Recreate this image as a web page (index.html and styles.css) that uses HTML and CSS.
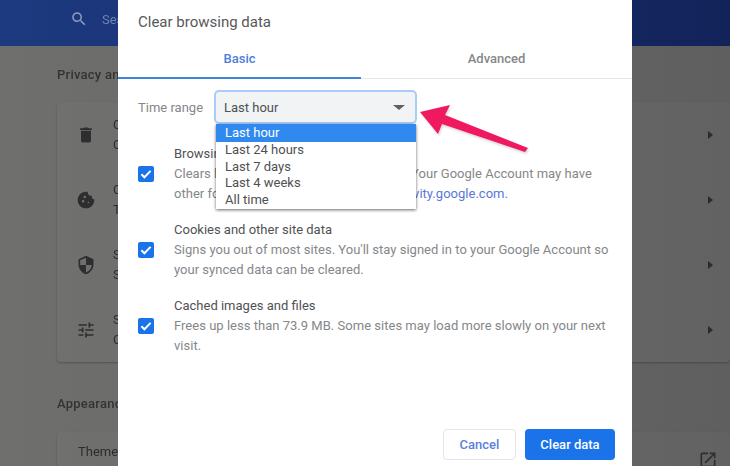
FILE: index.html
```html
<!DOCTYPE html>
<html lang="en">
<head>
  <meta charset="UTF-8">
  <title>Settings - Clear browsing data</title>
  <link rel="stylesheet" href="styles.css">
</head>
<body>

  <!-- Settings page, dimmed behind the dialog -->
  <header class="topo">
    <svg class="icone-busca" viewBox="0 0 24 24"><path d="M15.5 14h-.79l-.28-.27C15.41 12.59 16 11.11 16 9.5 16 5.91 13.09 3 9.5 3S3 5.91 3 9.5 5.91 16 9.5 16c1.61 0 3.09-.59 4.23-1.57l.27.28v.79l5 4.99L20.49 19l-4.99-5zm-6 0C7.01 14 5 11.99 5 9.5S7.01 5 9.5 5 14 7.01 14 9.5 11.99 14 9.5 14z"/></svg>
    <span class="busca-texto">Search settings</span>
  </header>

  <main class="pagina">
    <h2 class="secao">Privacy and security</h2>
    <div class="cartao">
      <div class="linha">
        <svg class="icone" viewBox="0 0 24 24"><path d="M6 19c0 1.1.9 2 2 2h8c1.1 0 2-.9 2-2V7H6v12zM19 4h-3.5l-1-1h-5l-1 1H5v2h14V4z"/></svg>
        <div class="linha-texto"><div>Clear browsing data</div><div>Clear history, cookies, cache, and more</div></div>
        <span class="seta"></span>
      </div>
      <div class="linha">
        <svg class="icone" viewBox="0 0 24 24"><path d="M21.95 10.99c-1.79-.03-3.7-1.95-2.68-4.22-2.97 1-5.78-1.59-5.19-4.56C7.11.74 2 6.41 2 12c0 5.52 4.48 10 10 10 5.89 0 10.54-5.08 9.95-11.01zM8.5 15c-.83 0-1.5-.67-1.5-1.5S7.67 12 8.5 12s1.5.67 1.5 1.5S9.33 15 8.5 15zm2-5C9.67 10 9 9.33 9 8.5S9.67 7 10.5 7s1.5.67 1.5 1.5-.67 1.5-1.5 1.5zm4.5 6c-.55 0-1-.45-1-1s.45-1 1-1 1 .45 1 1-.45 1-1 1z"/></svg>
        <div class="linha-texto"><div>Cookies and other site data</div><div>Third-party cookies are blocked</div></div>
        <span class="seta"></span>
      </div>
      <div class="linha">
        <svg class="icone" viewBox="0 0 24 24"><path d="M12 1L3 5v6c0 5.55 3.84 10.74 9 12 5.16-1.26 9-6.45 9-12V5l-9-4zm0 10.99h7c-.53 4.12-3.28 7.79-7 8.94V12H5V6.3l7-3.11v8.8z"/></svg>
        <div class="linha-texto"><div>Security</div><div>Safe Browsing and other security settings</div></div>
        <span class="seta"></span>
      </div>
      <div class="linha">
        <svg class="icone" viewBox="0 0 24 24"><path d="M3 17v2h6v-2H3zM3 5v2h10V5H3zm10 16v-2h8v-2h-8v-2h-2v6h2zM7 9v2H3v2h4v2h2V9H7zm14 4v-2H11v2h10zm-6-4h2V7h4V5h-4V3h-2v6z"/></svg>
        <div class="linha-texto"><div>Site Settings</div><div>Controls what information sites can use</div></div>
        <span class="seta"></span>
      </div>
    </div>

    <h2 class="secao secao-aparencia">Appearance</h2>
    <div class="cartao">
      <div class="linha linha-tema">
        <span class="tema-texto">Themes</span>
        <svg class="icone-externo" viewBox="0 0 24 24"><path d="M19 19H5V5h7V3H5c-1.11 0-2 .9-2 2v14c0 1.1.89 2 2 2h14c1.1 0 2-.9 2-2v-7h-2v7zM14 3v2h3.59l-9.83 9.83 1.41 1.41L19 6.41V10h2V3h-7z"/></svg>
      </div>
    </div>
  </main>

  <!-- Dialog -->
  <section class="dialogo">
    <h3 class="dialogo-titulo">Clear browsing data</h3>

    <div class="abas">
      <div class="aba aba-ativa">Basic</div>
      <div class="aba">Advanced</div>
    </div>

    <div class="intervalo">
      <label class="intervalo-rotulo">Time range</label>
      <div class="seletor">
        <span>Last hour</span>
        <span class="seletor-seta"></span>
        <ul class="lista">
          <li class="lista-ativo">Last hour</li>
          <li>Last 24 hours</li>
          <li>Last 7 days</li>
          <li>Last 4 weeks</li>
          <li>All time</li>
        </ul>
      </div>
    </div>

    <div class="opcao">
      <span class="caixa"><svg viewBox="0 0 16 16"><path d="M3.4 8.3l3 3 6.2-6.4"/></svg></span>
      <div>
        <div class="opcao-titulo">Browsing history</div>
        <div class="opcao-desc">Clears history from all signed-in devices. Your Google Account may have other forms of browsing history at <a class="link" href="#">myactivity.google.com.</a></div>
      </div>
    </div>
    <div class="opcao">
      <span class="caixa"><svg viewBox="0 0 16 16"><path d="M3.4 8.3l3 3 6.2-6.4"/></svg></span>
      <div>
        <div class="opcao-titulo">Cookies and other site data</div>
        <div class="opcao-desc">Signs you out of most sites. You'll stay signed in to your Google Account so your synced data can be cleared.</div>
      </div>
    </div>
    <div class="opcao">
      <span class="caixa"><svg viewBox="0 0 16 16"><path d="M3.4 8.3l3 3 6.2-6.4"/></svg></span>
      <div>
        <div class="opcao-titulo">Cached images and files</div>
        <div class="opcao-desc">Frees up less than 73.9 MB. Some sites may load more slowly on your next visit.</div>
      </div>
    </div>

    <div class="botoes">
      <button class="botao botao-secundario">Cancel</button>
      <button class="botao botao-primario">Clear data</button>
    </div>
  </section>

  <!-- Annotation arrow pointing at the select -->
  <svg class="anotacao" viewBox="0 0 120 70"><polygon points="2,22 32,15 27,25 110,58 107,62 24,34 20,44"/></svg>

</body>
</html>
```

FILE: styles.css
```css
:root {
  --azul: #1a73e8;
  --azul-aba: #4a80d8;
  --texto: #5b5c5e;
  --texto-claro: #85878a;
  --icone: #2e2e2e;
}

html, body {
  height: 100%;
}

body {
  margin: 0;
  height: 100vh;
  overflow: hidden;
  position: relative;
  font-family: Roboto, "Liberation Sans", sans-serif;
  font-size: 13px;
  color: var(--texto);
  background: linear-gradient(to right, #6f706e, #5f5f5f);
  filter: blur(0.4px);
}

/* Page behind the dialog */
.topo {
  height: 46px;
  box-sizing: border-box;
  padding-left: 70px;
  display: flex;
  align-items: center;
  gap: 14px;
  background: linear-gradient(to right, #1d3a80, #13235a);
  color: #6f83b2;
}

.icone-busca {
  width: 18px;
  height: 18px;
  margin-top: -8px;
  fill: #8d9bbd;
}

.busca-texto {
  margin-top: -8px;
}

.pagina {
  padding-left: 57px;
  color: #2c2c2c;
}

.secao {
  margin: 0;
  padding-top: 21px;
  height: 35px;
  font-size: 13px;
  font-weight: 500;
  letter-spacing: 0.25px;
  color: #333333;
}

.secao-aparencia {
  padding-top: 34px;
  height: 36px;
}

.cartao {
  background: rgba(255,255,255,0.02);
  border-radius: 4px;
  box-shadow: 0 1px 2px rgba(0,0,0,0.25);
}

.linha {
  height: 65px;
  display: flex;
  align-items: center;
  padding: 0 17px 0 19px;
}

.icone {
  width: 20px;
  height: 20px;
  fill: var(--icone);
  flex-shrink: 0;
}

.linha-texto {
  margin-left: 17px;
  line-height: 20px;
  white-space: nowrap;
  flex: 1;
}

.seta {
  width: 0;
  height: 0;
  border-left: 5px solid #2a2a2a;
  border-top: 4px solid transparent;
  border-bottom: 4px solid transparent;
}

.linha-tema {
  height: 40px;
  justify-content: space-between;
  padding: 0 12px 0 21px;
}

.tema-texto {
  margin-bottom: 2px;
}

.icone-externo {
  width: 20px;
  height: 20px;
  fill: #2e2e2e;
  margin-top: 16px;
}

/* Dialog */
.dialogo {
  position: absolute;
  top: 0;
  bottom: 0;
  left: 118px;
  width: 514px;
  display: flex;
  flex-direction: column;
  background-color: white;
}

.dialogo-titulo {
  margin: 0;
  padding: 13px 20px 0;
  height: 34px;
  font-size: 15px;
  font-weight: 400;
  line-height: 18px;
  color: #57585a;
}

.abas {
  display: flex;
  height: 31px;
  border-bottom: 1px solid #e8e8e8;
}

.aba {
  width: 50%;
  height: 31px;
  box-sizing: border-box;
  padding-top: 4px;
  text-align: center;
  font-size: 13px;
  font-weight: 500;
  color: #85878a;
}

.aba-ativa {
  color: var(--azul-aba);
  border-bottom: 2px solid #3d86dc;
  height: 32px;
  width: 243px;
}

.abas .aba:last-child {
  width: 271px;
}

.intervalo {
  display: flex;
  align-items: center;
  padding: 11px 0 0 20px;
}

.intervalo-rotulo {
  width: 76px;
  color: var(--texto-claro);
}

.seletor {
  position: relative;
  width: 203px;
  height: 34px;
  box-sizing: border-box;
  padding: 0 8px;
  display: flex;
  align-items: center;
  justify-content: space-between;
  background-color: #f1f3f4;
  border: 2px solid #a9cdf5;
  border-radius: 5px;
  color: #4f5052;
}

.seletor-seta {
  width: 0;
  height: 0;
  margin-right: 2px;
  border-top: 5px solid #5f6064;
  border-left: 6px solid transparent;
  border-right: 6px solid transparent;
}

.lista {
  position: absolute;
  top: 32px;
  left: 0;
  width: 200px;
  box-sizing: border-box;
  margin: 0;
  padding: 0 0 1px;
  list-style: none;
  background-color: white;
  box-shadow: 0 1px 3px rgba(0,0,0,0.6);
  line-height: 16.6px;
  color: #4f5052;
}

.lista li {
  padding-left: 9px;
}

.lista .lista-ativo {
  height: 18px;
  line-height: 18px;
  background-color: #2f89ee;
  color: white;
}

.opcao {
  display: flex;
  align-items: center;
  padding: 0 20px;
  margin-top: 16px;
  height: 60px;
}

.intervalo + .opcao {
  margin-top: 20px;
}

.caixa {
  width: 16px;
  height: 16px;
  flex-shrink: 0;
  margin-right: 20px;
  border-radius: 2px;
  background-color: var(--azul);
}

.caixa svg {
  display: block;
  fill: none;
  stroke: white;
  stroke-width: 2;
}

.opcao-titulo {
  line-height: 20px;
  color: #505154;
}

.opcao-desc {
  line-height: 20px;
  color: var(--texto-claro);
  width: 440px;
  letter-spacing: 0.02px;
}

.link {
  color: #5a77d6;
  text-decoration: none;
}

.botoes {
  margin-top: auto;
  display: flex;
  justify-content: flex-end;
  gap: 9px;
  padding: 0 17px 6px 0;
}

.botao {
  height: 31px;
  padding: 0;
  border-radius: 4px;
  font-family: inherit;
  font-size: 13px;
  font-weight: 500;
}

.botao-primario {
  width: 90px;
  background-color: var(--azul);
  border: none;
  color: white;
}

.botao-secundario {
  width: 73px;
  background-color: white;
  border: 1px solid #e3e5e8;
  color: #5a7fdc;
}

/* Annotation */
.anotacao {
  position: absolute;
  left: 418px;
  top: 90px;
  width: 120px;
  height: 70px;
  overflow: visible;
  fill: #f0185f;
  filter: drop-shadow(1px 2px 1px rgba(0,0,0,0.15));
}
```
